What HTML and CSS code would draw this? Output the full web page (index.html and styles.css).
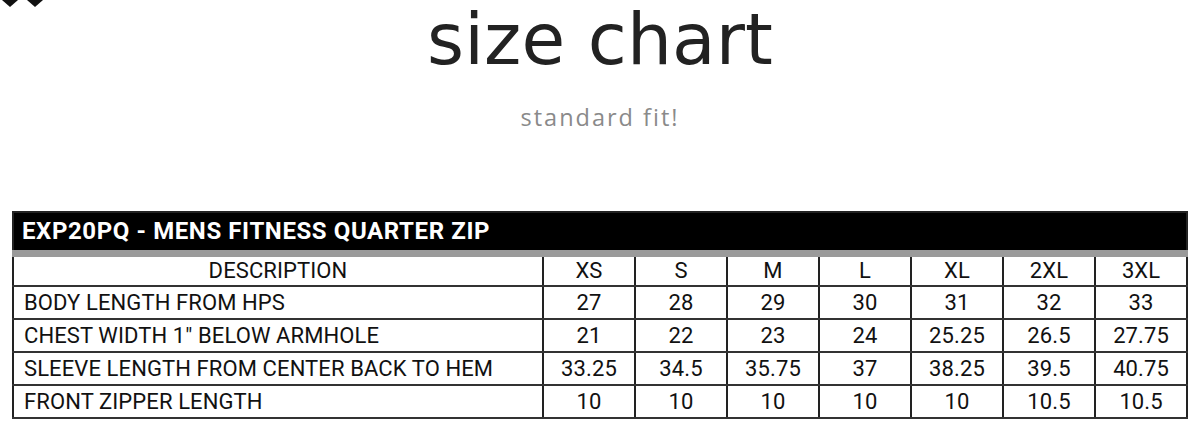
FILE: index.html
```html
<!DOCTYPE html>
<html>
<head>
<meta charset="utf-8">
<link rel="stylesheet" href="styles.css">
</head>
<body>
<svg class="corner" width="48" height="8" viewBox="0 0 48 8">
  <path d="M2 0 L18 0 L10 7 Z" fill="#111"/>
  <path d="M27 0 L43 0 L35 7 Z" fill="#111"/>
</svg>
<header class="head">
  <h1 class="title">size chart</h1>
  <p class="subtitle">standard fit!</p>
</header>
<section class="chart">
  <table class="sizes">
    <colgroup>
      <col class="c-desc"><col class="c-size"><col class="c-size"><col class="c-size"><col class="c-size"><col class="c-size"><col class="c-size"><col class="c-size">
    </colgroup>
    <thead>
      <tr class="bar"><th colspan="8">EXP20PQ - MENS FITNESS QUARTER ZIP</th></tr>
      <tr class="labels"><th>DESCRIPTION</th><th>XS</th><th>S</th><th>M</th><th>L</th><th>XL</th><th>2XL</th><th>3XL</th></tr>
    </thead>
    <tbody>
      <tr><td>BODY LENGTH FROM HPS</td><td>27</td><td>28</td><td>29</td><td>30</td><td>31</td><td>32</td><td>33</td></tr>
      <tr><td>CHEST WIDTH 1" BELOW ARMHOLE</td><td>21</td><td>22</td><td>23</td><td>24</td><td>25.25</td><td>26.5</td><td>27.75</td></tr>
      <tr><td>SLEEVE LENGTH FROM CENTER BACK TO HEM</td><td>33.25</td><td>34.5</td><td>35.75</td><td>37</td><td>38.25</td><td>39.5</td><td>40.75</td></tr>
      <tr><td>FRONT ZIPPER LENGTH</td><td>10</td><td>10</td><td>10</td><td>10</td><td>10</td><td>10.5</td><td>10.5</td></tr>
    </tbody>
  </table>
</section>
</body>
</html>
```
FILE: styles.css
```css
html, body {
  margin: 0;
  padding: 0;
  background: #fff;
}
body {
  width: 1200px;
  height: 438px;
  overflow: hidden;
  position: relative;
  font-family: "DejaVu Sans", sans-serif;
}
.corner {
  position: absolute;
  left: 0;
  top: 0;
}
.head {
  display: flex;
  flex-direction: column;
  align-items: center;
}
.title {
  margin: 0;
  padding-left: 0;
  font-family: "DejaVu Sans", sans-serif;
  font-weight: 400;
  font-size: 71px;
  line-height: 80px;
  color: #222;
  letter-spacing: 0.1px;
}
.subtitle {
  margin: 22px 0 0;
  font-family: "Open Sans", sans-serif;
  font-weight: 400;
  font-size: 23.5px;
  line-height: 30px;
  color: #8a8a8a;
  letter-spacing: 2px;
}
.chart {
  padding: 0 0 0 12px;
  margin-top: 79px;
}
.sizes {
  border-collapse: collapse;
  width: 1174px;
  table-layout: fixed;
  font-family: "Roboto", sans-serif;
  color: #111;
  border: 2px solid #222;
}
.c-desc { width: 530px; }
.c-size { width: 92px; }
.bar th {
  background: #000;
  color: #fff;
  height: 41px;
  padding: 0 0 0 8px;
  text-align: left;
  font-size: 24px;
  font-weight: 700;
  letter-spacing: 0.6px;
  border-bottom: 7px solid #9a9a9a;
  box-sizing: border-box;
}
.labels th,
.sizes td {
  height: 33px;
  padding: 0;
  box-sizing: border-box;
  font-size: 22px;
  font-weight: 400;
  letter-spacing: 0.1px;
  text-align: center;
  border-left: 2px solid #222;
  border-right: 2px solid #222;
  border-top: 2px solid #333;
  border-bottom: 2px solid #333;
}
.labels th {
  border-top: none;
}
.sizes td:first-child {
  text-align: left;
  padding-left: 10px;
}
```
